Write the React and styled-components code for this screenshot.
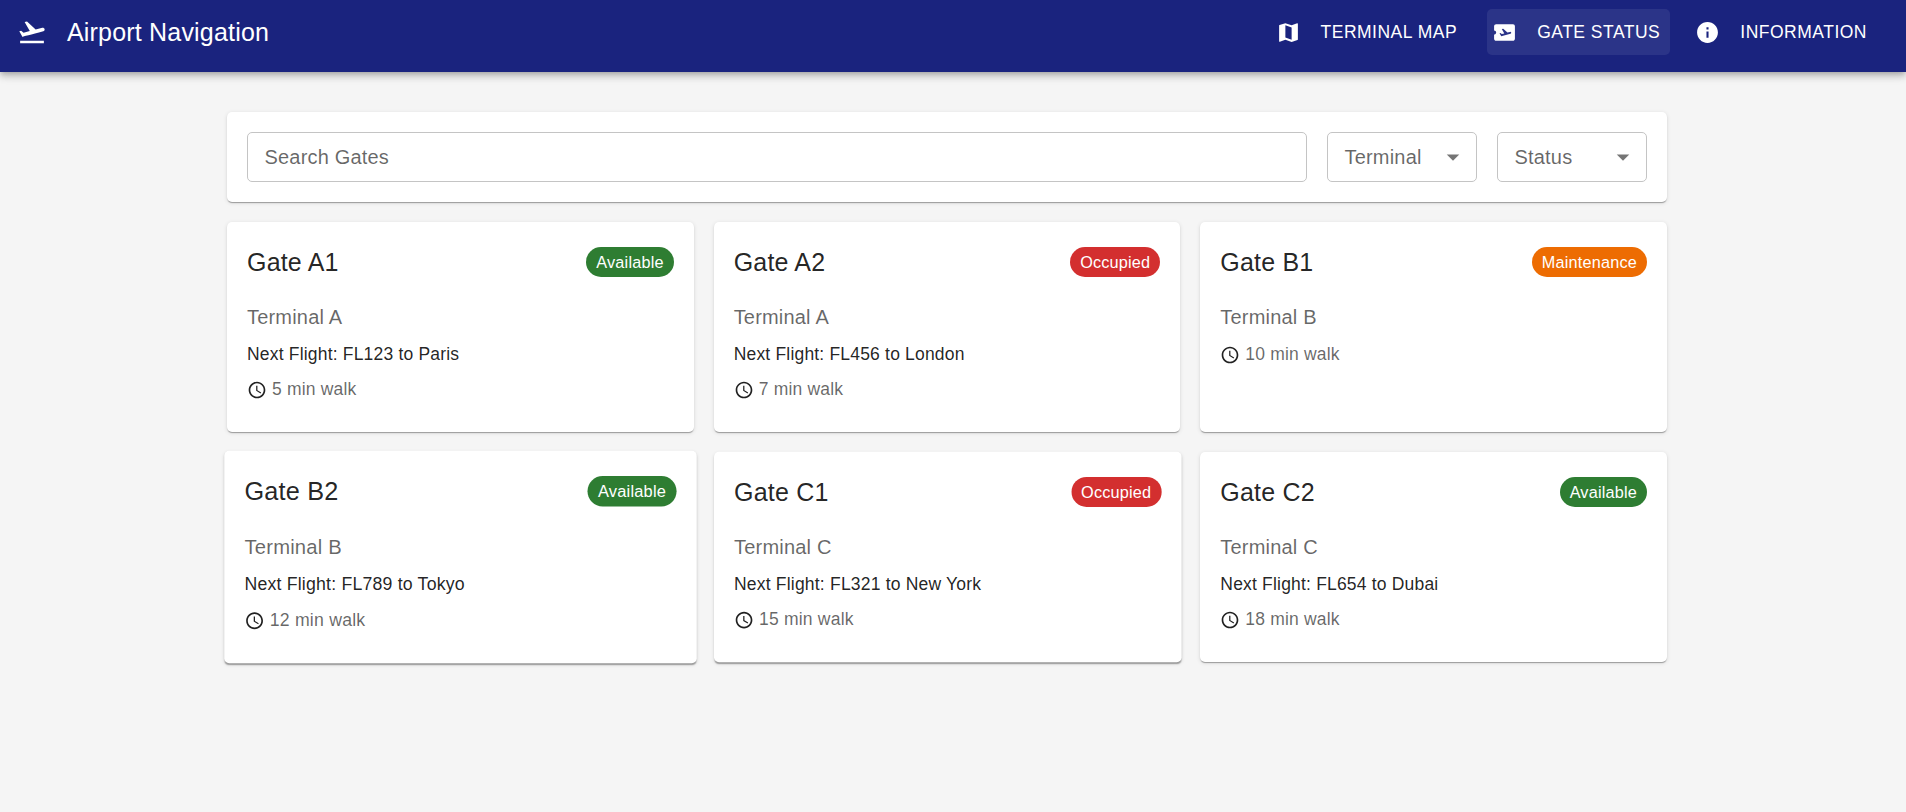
import React from "react";
import styled, { createGlobalStyle } from "styled-components";
import {
  MdFlightTakeoff,
  MdMap,
  MdAirplaneTicket,
  MdInfo,
  MdAccessTime,
  MdArrowDropDown,
} from "react-icons/md";

const GlobalStyle = createGlobalStyle`
  * { box-sizing: border-box; }
  body {
    margin: 0;
    background: #f5f5f5;
    color: rgba(0, 0, 0, 0.87);
    font-family: "Liberation Sans", Arial, sans-serif;
    font-size: 20px;
    line-height: 1.5;
    letter-spacing: 0.00938em;
  }
`;

const Page = styled.div`
  min-height: 812px;
`;

const AppBar = styled.header`
  display: flex;
  align-items: center;
  height: 72px;
  padding: 0 29px 8px 17px;
  background: #1a237e;
  color: #fff;
  box-shadow: 0 2.5px 5px -1.25px rgba(0, 0, 0, 0.2),
    0 5px 6.25px 0 rgba(0, 0, 0, 0.14), 0 1.25px 12.5px 0 rgba(0, 0, 0, 0.12);
`;

const Brand = styled.h1`
  display: flex;
  align-items: center;
  gap: 20px;
  flex: 1;
  margin: 0;
  font-size: 25px;
  font-weight: 400;
  line-height: 1.6;
  letter-spacing: 0.0075em;

  svg {
    font-size: 30px;
  }
`;

const Nav = styled.nav`
  display: flex;
  gap: 20px;
`;

const NavButton = styled.button`
  display: flex;
  align-items: center;
  gap: 20px;
  height: 46px;
  padding: 0 10px 0 5px;
  border: 0;
  border-radius: 5px;
  background: ${(p) => (p.$active ? "rgba(255, 255, 255, 0.08)" : "transparent")};
  color: inherit;
  font: 400 17.5px/30.6px "Liberation Sans", Arial, sans-serif;
  letter-spacing: 0.02857em;
  text-transform: uppercase;
  white-space: nowrap;

  svg {
    font-size: 25px;
  }
`;

const Content = styled.main`
  display: grid;
  gap: 20px;
  width: 1440px;
  margin: 40px 0 0 227px;
`;

const Paper = styled.div`
  background: #fff;
  border-radius: 5px;
  box-shadow: 0 2px 1px -1px rgba(0, 0, 0, 0.2),
    0 1px 1px 0 rgba(0, 0, 0, 0.14), 0 1px 4px 0 rgba(0, 0, 0, 0.12);
`;

const FilterBar = styled(Paper)`
  display: flex;
  gap: 20px;
  padding: 20px;
`;

const Field = styled.div`
  display: flex;
  align-items: center;
  justify-content: space-between;
  flex: ${(p) => (p.$wide ? "1" : "0 0 150px")};
  height: 50px;
  padding: 0 7.75px 0 16.5px;
  border: 1px solid #c4c4c4;
  border-radius: 5px;
  color: rgba(0, 0, 0, 0.6);

  svg {
    font-size: 30px;
    color: rgba(0, 0, 0, 0.54);
  }
`;

const GateGrid = styled.div`
  display: grid;
  grid-template-columns: repeat(3, 1fr);
  gap: 20px;
`;

const GateCard = styled(Paper)`
  height: 210px;
  padding: 20px 20px 30px;
  transform: ${(p) => (p.$scale ? `scale(${p.$scale})` : "none")};
  transform-origin: ${(p) => p.$origin || "center"};
  ${(p) =>
    p.$scale &&
    `box-shadow: 0 2.5px 1.25px -1.25px rgba(0, 0, 0, 0.2),
      0 1.25px 1.25px 0 rgba(0, 0, 0, 0.14), 0 1.25px 3.75px 0 rgba(0, 0, 0, 0.12);`}
`;

const CardHeader = styled.div`
  display: flex;
  align-items: center;
  justify-content: space-between;
  margin-bottom: 20px;
`;

const GateName = styled.h2`
  margin: 0;
  font-size: 25px;
  font-weight: 400;
  line-height: 40px;
  letter-spacing: 0.0075em;
`;

const statusColors = {
  Available: "#2e7d32",
  Occupied: "#d32f2f",
  Maintenance: "#ed6c02",
};

const StatusChip = styled.span`
  height: 30px;
  padding: 0 10px;
  border-radius: 20px;
  background: ${(p) => statusColors[p.$status]};
  color: #fff;
  font-size: 16.25px;
  line-height: 30px;
  letter-spacing: 0.1876px;
`;

const Terminal = styled.p`
  margin: 0;
  line-height: 30px;
  color: rgba(0, 0, 0, 0.6);
`;

const Flight = styled.p`
  margin: 10px 0 0;
  font-size: 17.5px;
  line-height: 25px;
  letter-spacing: 0.01071em;
`;

const Walk = styled.div`
  display: flex;
  align-items: center;
  gap: 5px;
  margin-top: 10px;
  font-size: 17.5px;
  line-height: 25px;
  letter-spacing: 0.01071em;

  svg {
    margin-top: 1px;
    font-size: 20px;
  }

  span {
    color: rgba(0, 0, 0, 0.6);
  }
`;

const gates = [
  { name: "A1", status: "Available", terminal: "A", flight: "FL123 to Paris", walk: 5 },
  { name: "A2", status: "Occupied", terminal: "A", flight: "FL456 to London", walk: 7 },
  { name: "B1", status: "Maintenance", terminal: "B", walk: 10 },
  { name: "B2", status: "Available", terminal: "B", flight: "FL789 to Tokyo", walk: 12, scale: 1.012 },
  { name: "C1", status: "Occupied", terminal: "C", flight: "FL321 to New York", walk: 15, scale: 1.0015, origin: "left center" },
  { name: "C2", status: "Available", terminal: "C", flight: "FL654 to Dubai", walk: 18 },
];

export default function App() {
  return (
    <Page>
      <GlobalStyle />
      <AppBar>
        <Brand>
          <MdFlightTakeoff />
          Airport Navigation
        </Brand>
        <Nav>
          <NavButton>
            <MdMap />
            Terminal Map
          </NavButton>
          <NavButton $active>
            <MdAirplaneTicket />
            Gate Status
          </NavButton>
          <NavButton>
            <MdInfo />
            Information
          </NavButton>
        </Nav>
      </AppBar>
      <Content>
        <FilterBar>
          <Field $wide>Search Gates</Field>
          <Field>
            Terminal
            <MdArrowDropDown />
          </Field>
          <Field>
            Status
            <MdArrowDropDown />
          </Field>
        </FilterBar>
        <GateGrid>
          {gates.map((gate) => (
            <GateCard key={gate.name} $scale={gate.scale} $origin={gate.origin}>
              <CardHeader>
                <GateName>Gate {gate.name}</GateName>
                <StatusChip $status={gate.status}>{gate.status}</StatusChip>
              </CardHeader>
              <Terminal>Terminal {gate.terminal}</Terminal>
              {gate.flight && <Flight>Next Flight: {gate.flight}</Flight>}
              <Walk>
                <MdAccessTime />
                <span>{gate.walk} min walk</span>
              </Walk>
            </GateCard>
          ))}
        </GateGrid>
      </Content>
    </Page>
  );
}
